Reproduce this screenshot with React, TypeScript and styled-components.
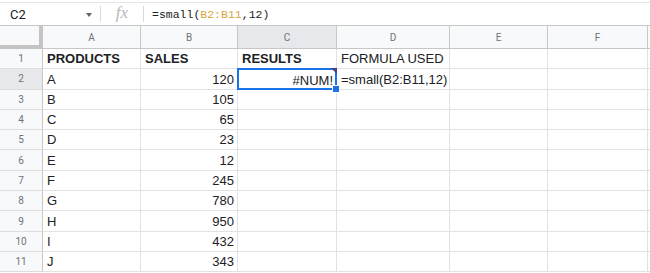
import React from "react";
import styled, { createGlobalStyle, css } from "styled-components";

const Global = createGlobalStyle`
  html, body { margin: 0; padding: 0; background: #fff; }
  body { font-family: "Liberation Sans", Arial, sans-serif; overflow: hidden; }
`;

const Page = styled.div`
  width: 650px;
  height: 273px;
  overflow: hidden;
  background: #fff;
  padding-top: 2px;
  box-sizing: border-box;
`;

const FormulaBar = styled.div`
  display: flex;
  align-items: center;
  height: 24px;
  border-top: 1px solid #e6e6e6;
  border-bottom: 1px solid #c7c7c7;
  box-sizing: border-box;
`;

const NameBox = styled.div`
  width: 100px;
  display: flex;
  align-items: center;
  justify-content: space-between;
  padding: 0 8px 0 10px;
  box-sizing: border-box;
  font-family: Roboto, "Liberation Sans", sans-serif;
  font-size: 13px;
  color: #202124;
`;

const Caret = styled.span`
  width: 0;
  height: 0;
  border-left: 3.5px solid transparent;
  border-right: 3.5px solid transparent;
  border-top: 4px solid #5f6368;
  margin-top: 2px;
`;

const Divider = styled.div`
  width: 1px;
  height: 16px;
  background: #d8d8d8;
`;

const Fx = styled.div`
  width: 42px;
  text-align: center;
  font-family: "Liberation Serif", "DejaVu Serif", serif;
  font-style: italic;
  font-size: 17px;
  color: #b8b8b8;
  padding-bottom: 2px;
`;

const FormulaText = styled.div`
  padding-left: 8px;
  font-family: "Liberation Mono", "DejaVu Sans Mono", monospace;
  font-size: 11.5px;
  color: #202124;
`;

const RangeRef = styled.span`
  color: #d9a53a;
`;

const Grid = styled.div`
  display: grid;
  grid-template-columns: 43px 98px 97px 99px 113px 98px 100px 20px;
  grid-template-rows: 23px repeat(11, 20.3px);
`;

const HeaderCell = styled.div<{ $active?: boolean; $corner?: boolean }>`
  background: ${(p) => (p.$active ? "#e6e8ec" : "#f8f9fa")};
  border-right: 1px solid #c7c7c7;
  border-bottom: 1px solid #c7c7c7;
  box-sizing: border-box;
  display: flex;
  align-items: center;
  justify-content: center;
  font-family: Roboto, "Liberation Sans", sans-serif;
  font-size: 10px;
  color: #6f7377;
  ${(p) =>
    p.$corner &&
    css`
      border-right: 4px solid #c4c4c4;
      border-bottom: 4px solid #c4c4c4;
    `}
`;

const RowHead = styled(HeaderCell)`
  border-bottom: 1px solid #dedede;
`;

const Cell = styled.div<{ $bold?: boolean; $right?: boolean; $selected?: boolean }>`
  position: relative;
  border-right: 1px solid #e2e2e2;
  border-bottom: 1px solid #e2e2e2;
  box-sizing: border-box;
  display: flex;
  align-items: flex-end;
  justify-content: ${(p) => (p.$right ? "flex-end" : "flex-start")};
  padding: 0 3px 2px 4px;
  font-size: 13px;
  font-weight: ${(p) => (p.$bold ? 700 : 400)};
  color: #202124;
  white-space: nowrap;
  overflow: visible;
  ${(p) =>
    p.$selected &&
    css`
      box-shadow: inset 0 0 0 2px #1a73e8;
      margin: -1px 0 0 -1px;
      border: none;
      padding-right: 4px;
      padding-bottom: 2px;
      z-index: 1;
    `}
`;

const ErrorMark = styled.span`
  position: absolute;
  top: 0;
  right: 0;
  width: 0;
  height: 0;
  border-top: 6px solid #4a3f80;
  border-left: 6px solid transparent;
`;

const FillHandle = styled.span`
  position: absolute;
  right: -3px;
  bottom: -3px;
  width: 6px;
  height: 6px;
  background: #1a73e8;
  border: 1px solid #fff;
`;

const columns = ["A", "B", "C", "D", "E", "F", ""];

const data: [string, string][] = [
  ["A", "120"],
  ["B", "105"],
  ["C", "65"],
  ["D", "23"],
  ["E", "12"],
  ["F", "245"],
  ["G", "780"],
  ["H", "950"],
  ["I", "432"],
  ["J", "343"],
];

export default function App() {
  return (
    <Page>
      <Global />
      <FormulaBar>
        <NameBox>
          C2
          <Caret />
        </NameBox>
        <Divider />
        <Fx>fx</Fx>
        <Divider />
        <FormulaText>
          =small(<RangeRef>B2:B11</RangeRef>,12)
        </FormulaText>
      </FormulaBar>
      <Grid>
        <HeaderCell $corner />
        {columns.map((c, i) => (
          <HeaderCell key={i} $active={c === "C"}>
            {c}
          </HeaderCell>
        ))}

        <RowHead>1</RowHead>
        <Cell $bold>PRODUCTS</Cell>
        <Cell $bold>SALES</Cell>
        <Cell $bold>RESULTS</Cell>
        <Cell>FORMULA USED</Cell>
        <Cell />
        <Cell />
        <Cell />

        {data.map(([p, s], i) => (
          <React.Fragment key={p}>
            <RowHead $active={i === 0}>{i + 2}</RowHead>
            <Cell>{p}</Cell>
            <Cell $right>{s}</Cell>
            {i === 0 ? (
              <Cell $right $selected>
                #NUM!
                <ErrorMark />
                <FillHandle />
              </Cell>
            ) : (
              <Cell />
            )}
            <Cell>{i === 0 ? "=small(B2:B11,12)" : ""}</Cell>
            <Cell />
            <Cell />
            <Cell />
          </React.Fragment>
        ))}
      </Grid>
    </Page>
  );
}
